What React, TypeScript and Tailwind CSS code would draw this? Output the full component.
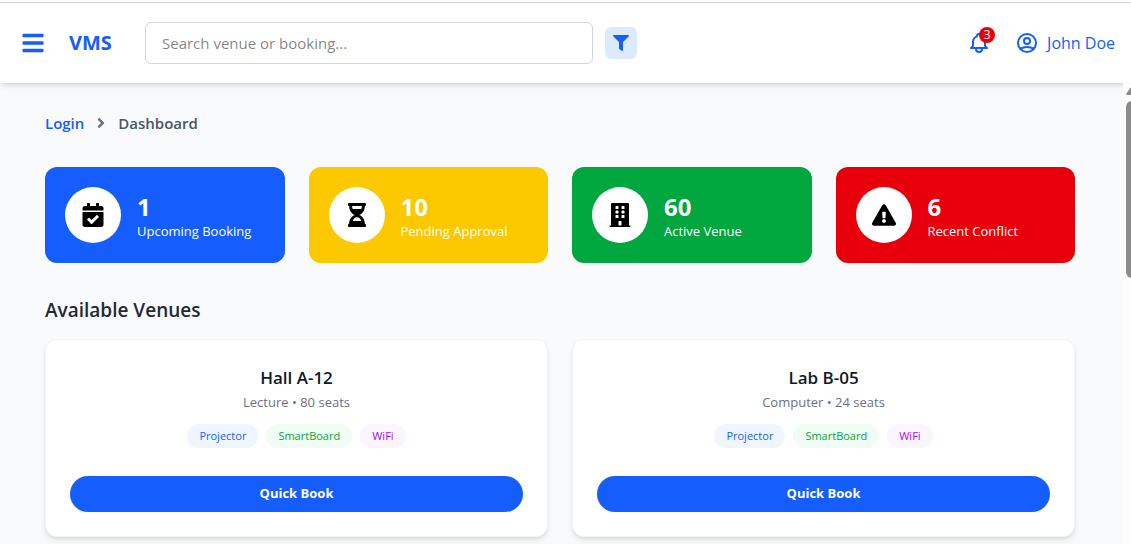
import {
  FaAngleRight,
  FaBars,
  FaBuilding,
  FaCalendarCheck,
  FaExclamationTriangle,
  FaFilter,
  FaHourglassHalf,
} from "react-icons/fa";
import { HiOutlineBell, HiOutlineUserCircle } from "react-icons/hi";
import type { IconType } from "react-icons";

type Stat = { value: number; label: string; color: string; icon: IconType };

const stats: Stat[] = [
  { value: 1, label: "Upcoming Booking", color: "bg-[#155dfc]", icon: FaCalendarCheck },
  { value: 10, label: "Pending Approval", color: "bg-[#fcc800]", icon: FaHourglassHalf },
  { value: 60, label: "Active Venue", color: "bg-[#00a63e]", icon: FaBuilding },
  { value: 6, label: "Recent Conflict", color: "bg-[#e7000b]", icon: FaExclamationTriangle },
];

const features = [
  { name: "Projector", style: "bg-blue-50 text-blue-600" },
  { name: "SmartBoard", style: "bg-green-50 text-green-600" },
  { name: "WiFi", style: "bg-purple-50 text-purple-600" },
];

const venues = [
  { name: "Hall A-12", details: "Lecture • 80 seats" },
  { name: "Lab B-05", details: "Computer • 24 seats" },
];

function Header() {
  return (
    <header className="relative z-10 flex h-20 items-center justify-between bg-white pr-4 pl-[21px] shadow-md">
      <div className="flex min-w-0 flex-1 items-center">
        <button aria-label="Toggle menu" className="mr-6 text-[#155dfc]">
          <FaBars size={24} />
        </button>
        <span className="mr-8 w-11 text-xl leading-7 font-bold text-[#155dfc]">VMS</span>
        <input
          type="text"
          aria-label="Search venue or booking"
          placeholder="Search venue or booking..."
          className="h-[42px] w-full max-w-md min-w-0 rounded-md border border-gray-300 px-4 text-[15px] outline-none"
        />
        <button aria-label="Filter" className="ml-3 rounded-md bg-blue-100 p-2 text-[#155dfc]">
          <FaFilter size={16} />
        </button>
      </div>
      <div className="flex items-center gap-6 text-[#155dfc]">
        <button aria-label="Notifications" className="relative">
          <HiOutlineBell size={24} />
          <span className="absolute -top-1 -right-1 flex size-4 items-center justify-center rounded-full bg-[#e7000b] text-xs text-white">
            3
          </span>
        </button>
        <button className="flex items-center gap-2 text-base leading-6">
          <HiOutlineUserCircle size={24} />
          John Doe
        </button>
      </div>
    </header>
  );
}

function StatCard({ value, label, color, icon: Icon }: Stat) {
  return (
    <div className={`flex items-center gap-4 rounded-xl p-5 text-white ${color}`}>
      <div className="flex size-14 shrink-0 items-center justify-center rounded-full bg-white text-black">
        <Icon size={24} />
      </div>
      <div className="pt-1">
        <p className="text-2xl leading-7 font-bold">{value}</p>
        <p className="text-[13px] leading-5">{label}</p>
      </div>
    </div>
  );
}

function VenueCard({ name, details }: { name: string; details: string }) {
  return (
    <article className="rounded-xl border border-gray-100 bg-white p-6 text-center shadow-md">
      <h3 className="text-[17px] leading-7 font-semibold text-gray-900">{name}</h3>
      <p className="text-[13px] leading-5 text-gray-500">{details}</p>
      <ul className="mt-3 flex flex-wrap justify-center gap-2">
        {features.map((feature) => (
          <li key={feature.name} className={`rounded-full px-3 py-1 text-[11px] leading-4 ${feature.style}`}>
            {feature.name}
          </li>
        ))}
      </ul>
      <button className="mt-7 h-9 w-full rounded-full bg-[#155dfc] text-[13px] font-bold text-white">
        Quick Book
      </button>
    </article>
  );
}

function ScrollTrack() {
  return (
    <div aria-hidden="true" className="relative z-20 w-2 shrink-0 overflow-hidden bg-[#fcfcfc] pt-1 pl-[3px]">
      <svg width="9" height="8" viewBox="0 0 9 8" className="max-w-none fill-[#8b8b8b]">
        <path d="M4 1.2Q4.6.5 5.2 1.2L9 6.2V8H1Q0 8 .4 6.6Z" />
      </svg>
      <div className="mt-1.5 h-[177px] w-3 rounded-md bg-[#8b8b8b]" />
    </div>
  );
}

export default function App() {
  return (
    <div className="flex min-h-screen flex-col bg-white pt-0.5 font-['Open_Sans','Noto_Sans',sans-serif]">
      <div className="border-t border-gray-300" />
      <Header />
      <div className="flex flex-1">
        <main className="min-w-0 flex-1 bg-gray-50 pt-7 pr-12 pl-[45px]">
          <nav aria-label="Breadcrumb" className="flex items-center gap-[9px] text-[15px] leading-6 font-semibold">
            <a href="#login" className="text-[#155dfc]">
              Login
            </a>
            <FaAngleRight size={16} className="text-gray-500" />
            <span className="text-gray-600">Dashboard</span>
          </nav>
          <section className="mt-8 grid grid-cols-2 gap-6 md:grid-cols-4">
            {stats.map((stat) => (
              <StatCard key={stat.label} {...stat} />
            ))}
          </section>
          <section className="mt-[33px]">
            <h2 className="text-[19px] leading-7 font-semibold text-gray-800">Available Venues</h2>
            <div className="mt-[15px] grid gap-6 md:grid-cols-2">
              {venues.map((venue) => (
                <VenueCard key={venue.name} {...venue} />
              ))}
            </div>
          </section>
        </main>
        <ScrollTrack />
      </div>
    </div>
  );
}
